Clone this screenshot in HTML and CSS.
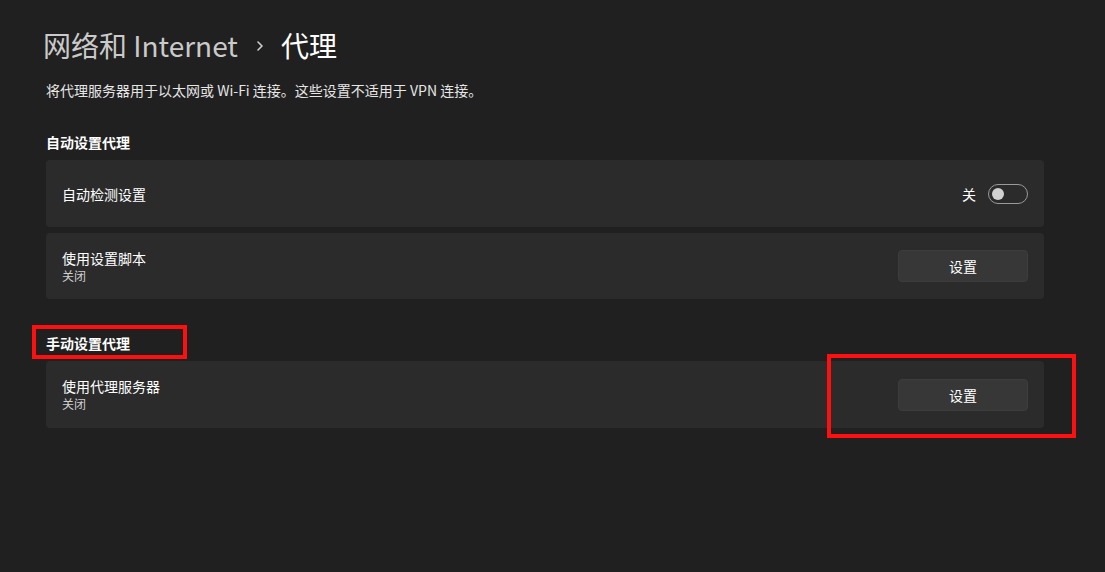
FILE: index.html
```html
<!DOCTYPE html>
<html lang="zh-CN">
<head>
<meta charset="utf-8">
<title>代理</title>
<link rel="stylesheet" href="styles.css">
</head>
<body>
<div class="page">
  <h1 class="title">
    <span class="crumb">网络和 Internet</span>
    <svg class="chev" width="12" height="12" viewBox="0 0 12 12"><path d="M4 2 L8 6 L4 10" fill="none" stroke="#d0d0d0" stroke-width="1.6" stroke-linecap="round" stroke-linejoin="round"/></svg>
    <span class="current">代理</span>
  </h1>
  <p class="desc">将代理服务器用于以太网或 Wi-Fi 连接。这些设置不适用于 VPN 连接。</p>

  <h2 class="section first">自动设置代理</h2>
  <div class="card">
    <div class="label"><div class="primary">自动检测设置</div></div>
    <div class="control">
      <span class="state">关</span>
      <span class="toggle"><span class="knob"></span></span>
    </div>
  </div>
  <div class="card gap">
    <div class="label">
      <div class="primary">使用设置脚本</div>
      <div class="secondary">关闭</div>
    </div>
    <button class="btn">设置</button>
  </div>

  <h2 class="section">手动设置代理</h2>
  <div class="card">
    <div class="label">
      <div class="primary">使用代理服务器</div>
      <div class="secondary">关闭</div>
    </div>
    <button class="btn">设置</button>
  </div>
</div>
<div class="mark mark-a"></div>
<div class="mark mark-b"></div>
</body>
</html>
```

FILE: styles.css
```css
* { box-sizing: border-box; }
html, body { margin: 0; padding: 0; }
body {
  background: #202020;
  width: 1105px;
  height: 572px;
  overflow: hidden;
  font-family: "Noto Sans CJK SC", "Noto Sans", sans-serif;
  color: #ffffff;
  position: relative;
}
.page {
  padding: 25px 61px 0 46px;
}
.title {
  margin: 0 0 0 -3px;
  height: 40px;
  line-height: 40px;
  font-size: 28px;
  font-weight: 400;
  display: flex;
  align-items: center;
}
.crumb { color: #cacaca; }
.chev { margin: 2px 15px 0 16px; }
.current { color: #ffffff; }
.desc {
  margin: 15px 0 0 0;
  font-size: 14px;
  line-height: 20px;
  color: #e6e6e6;
}
.section {
  margin: 34px 0 8px 0;
  font-size: 14px;
  line-height: 20px;
  font-weight: 700;
  color: #ffffff;
}
.section.first { margin-top: 32px; }
.card {
  height: 67px;
  background: #2b2b2b;
  border-radius: 4px;
  padding: 0 16px;
  display: flex;
  align-items: center;
  justify-content: space-between;
}
.card.gap { margin-top: 6px; height: 66px; }
.primary {
  font-size: 14px;
  line-height: 18px;
  color: #ffffff;
}
.secondary {
  font-size: 12px;
  line-height: 16px;
  color: #cfcfcf;
  margin-top: 1px;
}
.control {
  display: flex;
  align-items: center;
  gap: 12px;
}
.state { font-size: 14px; color: #ffffff; }
.toggle {
  width: 40px;
  height: 20px;
  border: 1px solid #9a9a9a;
  border-radius: 10px;
  display: flex;
  align-items: center;
  padding-left: 3px;
}
.knob {
  width: 12px;
  height: 12px;
  border-radius: 50%;
  background: #d0d0d0;
}
.btn {
  width: 130px;
  height: 32px;
  background: #373737;
  border: 1px solid #3d3d3d;
  border-radius: 4px;
  color: #ffffff;
  font-family: inherit;
  font-size: 14px;
  padding: 0;
}
.mark {
  position: absolute;
  border: 4px solid #fe1010;
}
.mark-a { left: 32px; top: 325px; width: 155px; height: 34px; }
.mark-b { left: 827px; top: 354px; width: 249px; height: 84px; }
```
